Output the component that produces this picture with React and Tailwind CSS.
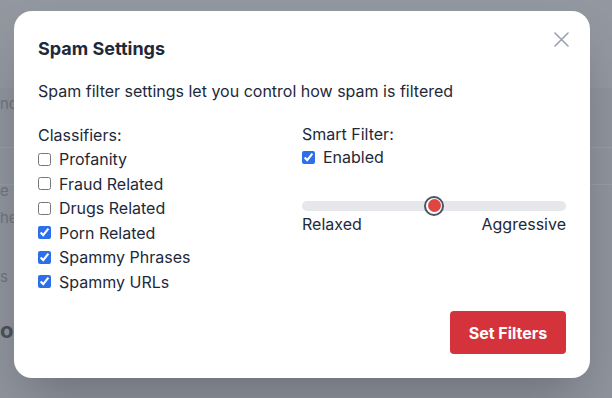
import { useState } from "react";

const classifiers = [
  { label: "Profanity", on: false },
  { label: "Fraud Related", on: false },
  { label: "Drugs Related", on: false },
  { label: "Porn Related", on: true },
  { label: "Spammy Phrases", on: true },
  { label: "Spammy URLs", on: true },
];

function Check({ label, checked, onChange }) {
  return (
    <label className="flex items-center h-[24.5px]">
      <input
        type="checkbox"
        checked={checked}
        onChange={onChange}
        className="m-0 mr-2 w-[13px] h-[13px] accent-[#2b6fea]"
      />
      <span>{label}</span>
    </label>
  );
}

function App() {
  const [checks, setChecks] = useState(classifiers.map((c) => c.on));
  const [smart, setSmart] = useState(true);

  return (
    <div className="relative w-[612px] h-[398px] overflow-hidden bg-[#8f939c] font-['Inter',sans-serif]">
      {/* page behind the overlay */}
      <div className="flex flex-col text-[15px] text-[#6f737c] whitespace-nowrap">
        <div className="h-[88px] bg-[#9397a0]" />
        <p className="h-[60px] pt-[5px] border-b border-[#979ba4]">nd</p>
        <p className="h-[36px] pt-[32px]">e</p>
        <p className="h-[52px] pt-[22px] border-t border-[#979ba4]">he</p>
        <p className="h-[52px] pt-[30px]">s</p>
        <p className="pt-[26px] text-[22px] font-bold text-[#4d515a]">o</p>
      </div>

      {/* modal */}
      <div className="absolute left-[14px] top-[11px] w-[576px] h-[367px] bg-white rounded-[18px] shadow-2xl px-6 pt-6 pb-6 flex flex-col text-gray-800">
        <div className="flex items-start justify-between">
          <h2 className="text-lg leading-7 font-bold text-gray-800">Spam Settings</h2>
          <button className="mt-[-3px] mr-[-3px] text-gray-400" aria-label="Close">
            <svg width="15" height="15" viewBox="0 0 15 15" fill="none" stroke="currentColor" strokeWidth="1.6" strokeLinecap="round">
              <path d="M1 1l13 13M14 1L1 14" />
            </svg>
          </button>
        </div>

        <p className="mt-4 text-base leading-6">
          Spam filter settings let you control how spam is filtered
        </p>

        <div className="mt-5 grid grid-cols-2 text-base leading-6">
          <div className="flex flex-col">
            <span className="h-6">Classifiers:</span>
            {classifiers.map((c, i) => (
              <Check
                key={c.label}
                label={c.label}
                checked={checks[i]}
                onChange={() =>
                  setChecks(checks.map((v, j) => (j === i ? !v : v)))
                }
              />
            ))}
          </div>

          <div className="flex flex-col">
            <span className="h-[22px] leading-[22px]">Smart Filter:</span>
            <Check label="Enabled" checked={smart} onChange={() => setSmart(!smart)} />

            <div className="mt-[31px] relative h-[10px] rounded-full bg-gray-200">
              <div className="absolute left-1/2 top-1/2 -translate-x-1/2 -translate-y-1/2 w-5 h-5 rounded-full border-2 border-gray-600 bg-white p-[1.5px]">
                <div className="w-full h-full rounded-full bg-[#e0453f]" />
              </div>
            </div>
            <div className="mt-[1px] flex justify-between">
              <span>Relaxed</span>
              <span>Aggressive</span>
            </div>
          </div>
        </div>

        <div className="mt-auto flex justify-end">
          <button className="w-[116px] h-[43px] rounded bg-[#d5333b] text-white font-bold text-base">
            Set Filters
          </button>
        </div>
      </div>
    </div>
  );
}

export default App;
